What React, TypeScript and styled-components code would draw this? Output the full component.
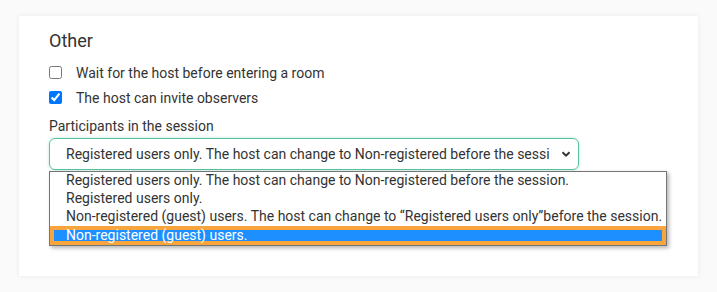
import React from 'react';
import styled, { createGlobalStyle } from 'styled-components';

const GlobalStyle = createGlobalStyle`
  body {
    margin: 0;
    background: #fafafa;
    font-family: Roboto, "Liberation Sans", sans-serif;
    color: #333;
  }
`;

const Page = styled.div`
  padding: 16px 19px;
  height: 292px;
  box-sizing: border-box;
`;

const Card = styled.section`
  position: relative;
  width: 679px;
  height: 260px;
  box-sizing: border-box;
  background: #fff;
  box-shadow: 0 0 5px rgba(0, 0, 0, 0.07);
  padding: 13px 30px;
  display: flex;
  flex-direction: column;
`;

const Title = styled.h3`
  margin: 0 0 7px;
  font-size: 18px;
  font-weight: 400;
  line-height: 24px;
  color: #333;
`;

const CheckRow = styled.label`
  display: flex;
  align-items: center;
  gap: 14px;
  height: 25px;
  font-size: 14px;
  color: #333;

  input {
    margin: 0;
    width: 13px;
    height: 13px;
  }
`;

const FieldLabel = styled.div`
  margin-top: 6px;
  font-size: 14px;
  line-height: 20px;
  color: #333;
`;

const SelectBox = styled.div`
  margin-top: 2px;
  width: 530px;
  height: 32px;
  box-sizing: border-box;
  border: 1px solid #55c39f;
  border-radius: 6px;
  box-shadow: 0 0 3px rgba(85, 195, 159, 0.45);
  display: flex;
  align-items: center;
  padding: 0 6px 0 16px;
  gap: 10px;
  font-size: 14px;
  color: #333;
`;

const SelectText = styled.span`
  flex: 1;
  white-space: nowrap;
  overflow: hidden;
`;

const Menu = styled.ul`
  position: absolute;
  left: 30px;
  top: 155px;
  width: 618px;
  margin: 0;
  padding: 0;
  list-style: none;
  box-sizing: border-box;
  background: #fff;
  border: 1px solid #767676;
  box-shadow: 2px 2px 4px rgba(0, 0, 0, 0.3);
`;

const Option = styled.li<{ $active?: boolean }>`
  box-sizing: border-box;
  height: ${(p) => (p.$active ? '19px' : '18px')};
  line-height: ${(p) => (p.$active ? '11px' : '17px')};
  font-size: 14px;
  white-space: nowrap;
  padding-left: ${(p) => (p.$active ? '12px' : '16px')};
  color: ${(p) => (p.$active ? '#fff' : '#333')};
  background: ${(p) => (p.$active ? '#1e8fff' : 'transparent')};
  border: ${(p) => (p.$active ? '4px solid #f7a53c' : 'none')};
`;

const options = [
  'Registered users only. The host can change to Non-registered before the session.',
  'Registered users only.',
  'Non-registered (guest) users. The host can change to \u201CRegistered users only\u201Dbefore the session.',
  'Non-registered (guest) users.',
];

const Chevron = () => (
  <svg width="12" height="12" viewBox="0 0 12 12">
    <path d="M2.5 4.2 L6 7.7 L9.5 4.2" fill="none" stroke="#333" strokeWidth="2" />
  </svg>
);

export default function App() {
  return (
    <>
      <GlobalStyle />
      <Page>
        <Card>
          <Title>Other</Title>
          <CheckRow>
            <input type="checkbox" />
            Wait for the host before entering a room
          </CheckRow>
          <CheckRow>
            <input type="checkbox" defaultChecked />
            The host can invite observers
          </CheckRow>
          <FieldLabel>Participants in the session</FieldLabel>
          <SelectBox>
            <SelectText>{options[0]}</SelectText>
            <Chevron />
          </SelectBox>
          <Menu>
            {options.map((o, i) => (
              <Option key={i} $active={i === 3}>
                {o}
              </Option>
            ))}
          </Menu>
        </Card>
      </Page>
    </>
  );
}
